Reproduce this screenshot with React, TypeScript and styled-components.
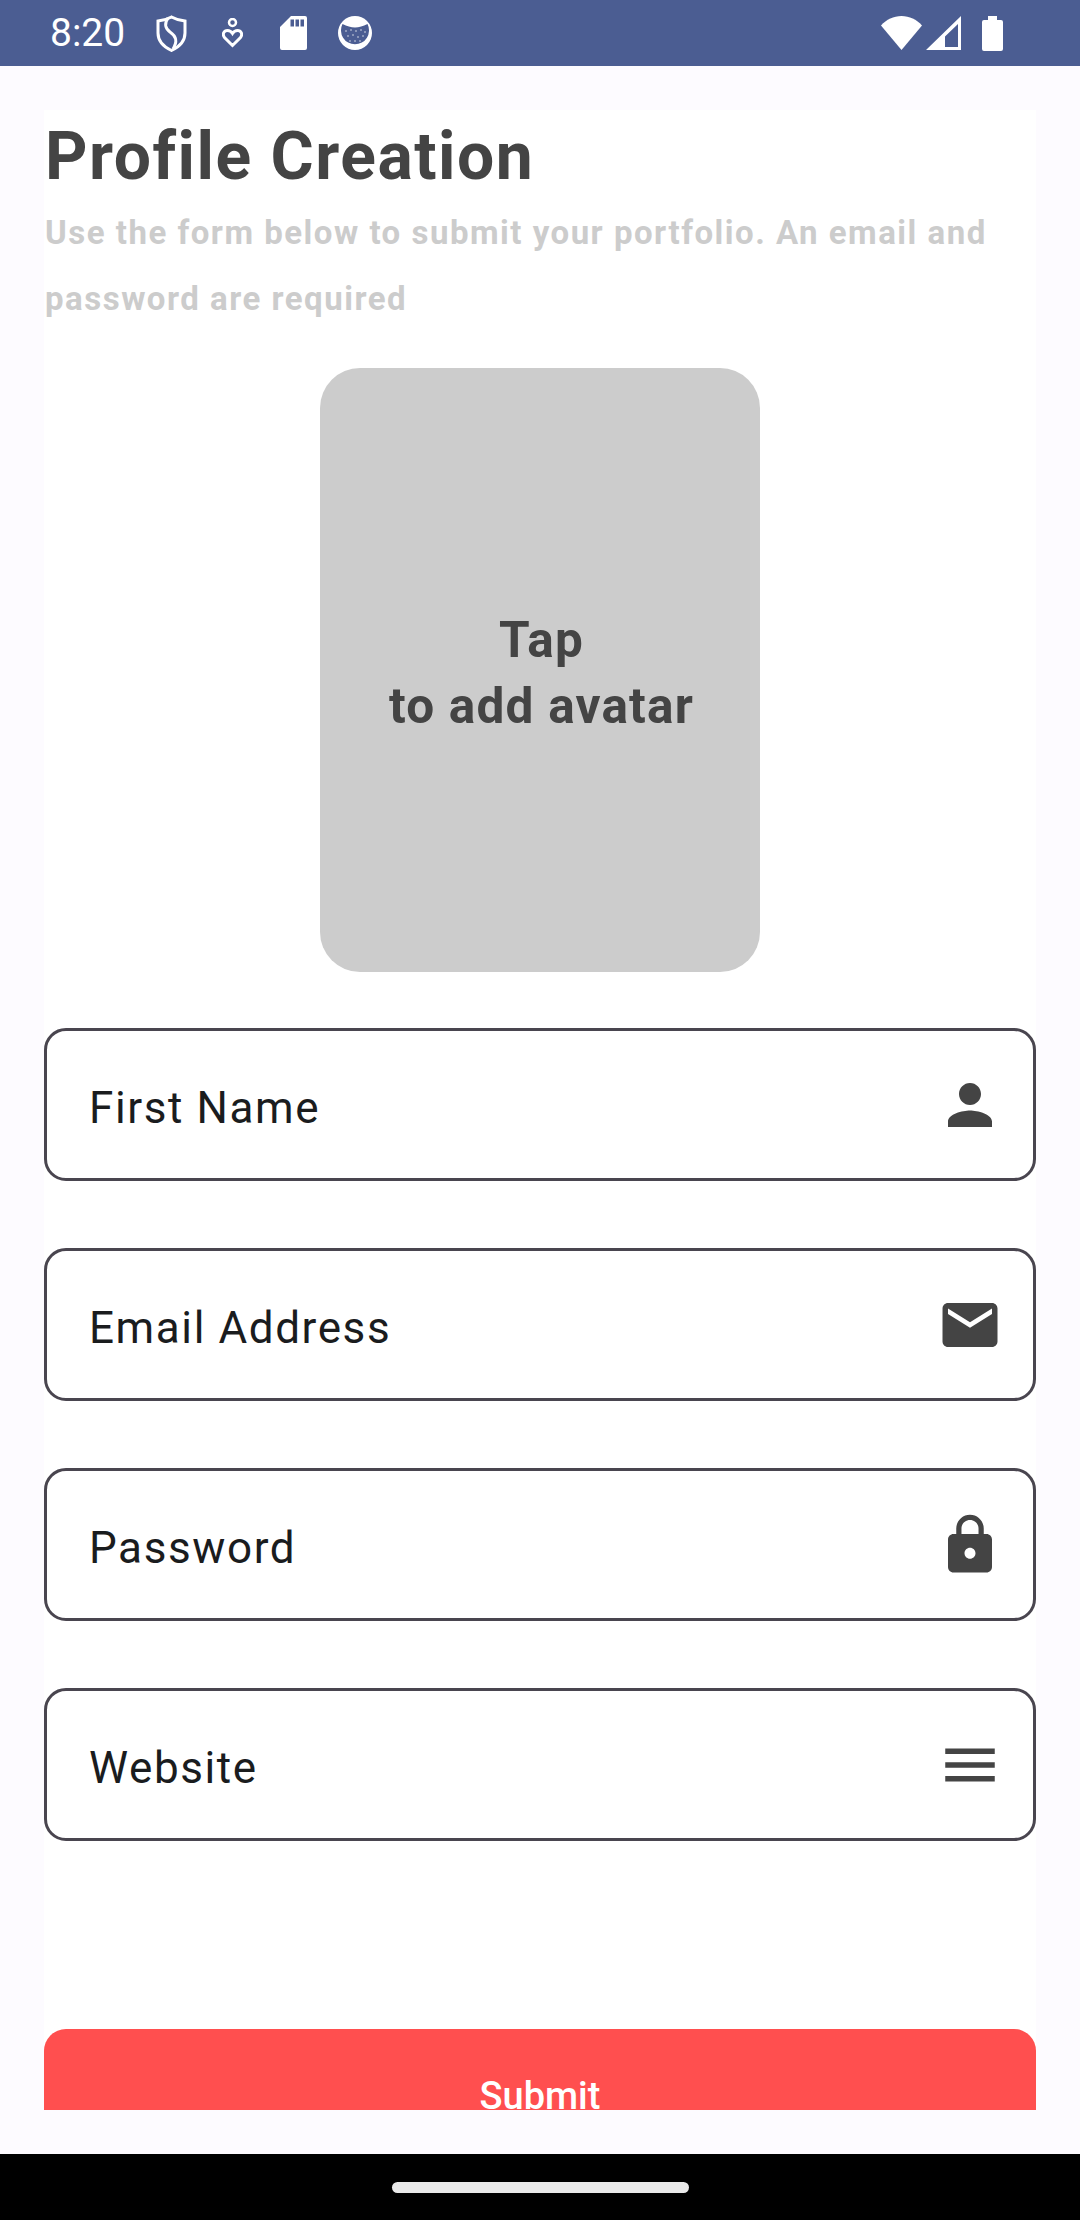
import styled, { createGlobalStyle } from "styled-components";

const GlobalStyle = createGlobalStyle`
  html, body {
    margin: 0;
    padding: 0;
    background: #fdfbff;
    font-family: Roboto, "Liberation Sans", sans-serif;
  }
`;

const Screen = styled.div`
  width: 1080px;
  height: 2220px;
  display: flex;
  flex-direction: column;
  overflow: hidden;
  background: #fdfbff;
`;

const StatusBar = styled.div`
  height: 66px;
  flex: none;
  display: flex;
  align-items: center;
  padding: 0 77px 0 50px;
  background: #4b5d92;
  color: #fff;
`;

const Time = styled.span`
  width: 91px;
  font-size: 39px;
  line-height: 66px;
`;

const NotifIcons = styled.div`
  display: flex;
  align-items: center;
  flex: 1;
`;

const NotifSlot = styled.div`
  width: 61px;
  display: flex;
  justify-content: center;
`;

const SystemIcons = styled.div`
  display: flex;
  align-items: center;
  gap: 4px;
`;

const StatusIcon = styled.svg`
  display: block;
  fill: #fff;
  flex: none;
`;

const BatteryIcon = styled(StatusIcon)`
  margin-left: 17px;
`;

const Body = styled.main`
  height: 2000px;
  flex: none;
  margin: 44px 44px 0;
  overflow: hidden;
  background: #fff;
`;

const Title = styled.h1`
  margin: 0;
  padding: 4px 0 0 1px;
  font-size: 66px;
  line-height: 86px;
  font-weight: 700;
  letter-spacing: 1.5px;
  color: #444444;
`;

const Intro = styled.p`
  margin: 0;
  padding-left: 1px;
  font-size: 33px;
  line-height: 66px;
  font-weight: 700;
  letter-spacing: 1.5px;
  color: #cccccc;
`;

const Avatar = styled.div`
  width: 440px;
  height: 604px;
  box-sizing: border-box;
  margin: 36px auto 0;
  padding: 6px 0 0 3px;
  border-radius: 40px;
  background: #cccccc;
  display: flex;
  align-items: center;
  justify-content: center;
  text-align: center;
  font-size: 49.5px;
  line-height: 66px;
  font-weight: 700;
  letter-spacing: 1.2px;
  color: #444444;
`;

const Form = styled.div`
  display: flex;
  flex-direction: column;
  gap: 67px;
  margin-top: 56px;
`;

const Field = styled.label`
  height: 153px;
  box-sizing: border-box;
  display: flex;
  align-items: center;
  justify-content: space-between;
  padding: 0 30px 0 42px;
  border: 3px solid #49454f;
  border-radius: 22px;
  background: #fff;
`;

const FieldLabel = styled.span`
  padding-top: 6px;
  font-size: 44px;
  letter-spacing: 1.6px;
  color: #1a1c1e;
`;

const FieldIcon = styled.svg`
  width: 66px;
  height: 66px;
  fill: #444444;
  flex: none;
`;

const SubmitButton = styled.button`
  display: block;
  width: 100%;
  height: 134px;
  margin-top: 188px;
  padding: 0;
  border: 0;
  border-radius: 22px;
  background: #ff4f4f;
  color: #fff;
  font-family: inherit;
  font-size: 38px;
  font-weight: 500;
`;

const NavBar = styled.div`
  margin-top: auto;
  height: 66px;
  flex: none;
  display: flex;
  align-items: center;
  justify-content: center;
  background: #000;
`;

const HomeHandle = styled.div`
  width: 297px;
  height: 11px;
  border-radius: 6px;
  background: #eaeaea;
`;

const fields = [
  {
    label: "First Name",
    icon: "M12 12c2.21 0 4-1.79 4-4s-1.79-4-4-4-4 1.79-4 4 1.79 4 4 4zm0 2c-2.67 0-8 1.34-8 4v2h16v-2c0-2.66-5.33-4-8-4z",
  },
  {
    label: "Email Address",
    icon: "M20 4H4c-1.1 0-1.99.9-1.99 2L2 18c0 1.1.9 2 2 2h16c1.1 0 2-.9 2-2V6c0-1.1-.9-2-2-2zm0 4l-8 5-8-5V6l8 5 8-5v2z",
  },
  {
    label: "Password",
    icon: "M18 8h-1V6c0-2.76-2.24-5-5-5S7 3.24 7 6v2H6c-1.1 0-2 .9-2 2v10c0 1.1.9 2 2 2h12c1.1 0 2-.9 2-2V10c0-1.1-.9-2-2-2zm-6 9c-1.1 0-2-.9-2-2s.9-2 2-2 2 .9 2 2-.9 2-2 2zm3.1-9H8.9V6c0-1.71 1.39-3.1 3.1-3.1 1.71 0 3.1 1.39 3.1 3.1v2z",
  },
  {
    label: "Website",
    icon: "M3 18h18v-2H3v2zm0-5h18v-2H3v2zm0-7v2h18V6H3z",
  },
];

const speckles = [
  [8, 15], [13, 14], [18, 15], [23, 14], [27, 16],
  [10, 20], [15, 19], [20, 21], [25, 20],
  [12, 25], [17, 25], [22, 25],
];

export default function App() {
  return (
    <Screen>
      <GlobalStyle />
      <StatusBar>
        <Time>8:20</Time>
        <NotifIcons>
          <NotifSlot>
            <StatusIcon width="31" height="37" viewBox="0 0 31 37">
              <path
                d="M15.5 2C19 4 24 5.5 29 6V18C29 26 23 32 15.5 35.5 8 32 2 26 2 18V6C7 5.5 12 4 15.5 2Z"
                fill="none"
                stroke="#fff"
                strokeWidth="3"
              />
              <path
                d="M12 3C8 9 9 13 14 17 20 21 22 26 17 34"
                fill="none"
                stroke="#fff"
                strokeWidth="3"
              />
            </StatusIcon>
          </NotifSlot>
          <NotifSlot>
            <StatusIcon width="21" height="30" viewBox="0 0 21 30">
              <circle cx="10.5" cy="4.5" r="3.5" fill="none" stroke="#fff" strokeWidth="2.5" />
              <path
                d="M10.5 27.5 2.5 19.500C0 16 2 12.5 5.5 12.5 8 12.5 9.500 14 10.500 15.500 11.500 14 13 12.500 15.500 12.500 19 12.500 21 16 18.500 19.500Z"
                fill="none"
                stroke="#fff"
                strokeWidth="3"
              />
            </StatusIcon>
          </NotifSlot>
          <NotifSlot>
            <StatusIcon width="27" height="34" viewBox="0 0 27 34">
              <path
                d="M11 0h14a2 2 0 0 1 2 2v30a2 2 0 0 1-2 2H2a2 2 0 0 1-2-2V11zm-.500 3.500v7h3.500v-7zm5 0v7h3.500v-7zm5 0v7h3.500v-7z"
                fillRule="evenodd"
              />
            </StatusIcon>
          </NotifSlot>
          <NotifSlot>
            <StatusIcon width="34" height="34" viewBox="0 0 34 34">
              <path
                d="M17 0a17 17 0 1 1 0 34 17 17 0 0 1 0-34zM4.500 8C9 10 13 11.500 17 11.500S25 10 29.500 8A14 14 0 1 1 4.500 8Z"
                fillRule="evenodd"
              />
              {speckles.map(([cx, cy]) => (
                <circle key={`${cx}-${cy}`} cx={cx} cy={cy} r="0.8" opacity="0.8" />
              ))}
            </StatusIcon>
          </NotifSlot>
        </NotifIcons>
        <SystemIcons>
          <StatusIcon width="41" height="34" viewBox="0 0 41 34">
            <path d="M20.500 34 0 9.500C5.500 3.500 12.500 0 20.500 0S35.500 3.500 41 9.500z" />
          </StatusIcon>
          <StatusIcon width="35" height="34" viewBox="0 0 35 34">
            <path d="M35 0v34H0zM32 8 19 20.500V31H32z" fillRule="evenodd" />
          </StatusIcon>
          <BatteryIcon width="21" height="35" viewBox="0 0 21 35">
            <path d="M6 0h9v4h4a2 2 0 0 1 2 2v27a2 2 0 0 1-2 2H2a2 2 0 0 1-2-2V6a2 2 0 0 1 2-2h4z" />
          </BatteryIcon>
        </SystemIcons>
      </StatusBar>
      <Body>
        <Title>Profile Creation</Title>
        <Intro>
          Use the form below to submit your portfolio. An email and password are
          required
        </Intro>
        <Avatar>
          <div>
            Tap
            <br />
            to add avatar
          </div>
        </Avatar>
        <Form>
          {fields.map((field) => (
            <Field key={field.label}>
              <FieldLabel>{field.label}</FieldLabel>
              <FieldIcon viewBox="0 0 24 24">
                <path d={field.icon} />
              </FieldIcon>
            </Field>
          ))}
        </Form>
        <SubmitButton>Submit</SubmitButton>
      </Body>
      <NavBar>
        <HomeHandle />
      </NavBar>
    </Screen>
  );
}
